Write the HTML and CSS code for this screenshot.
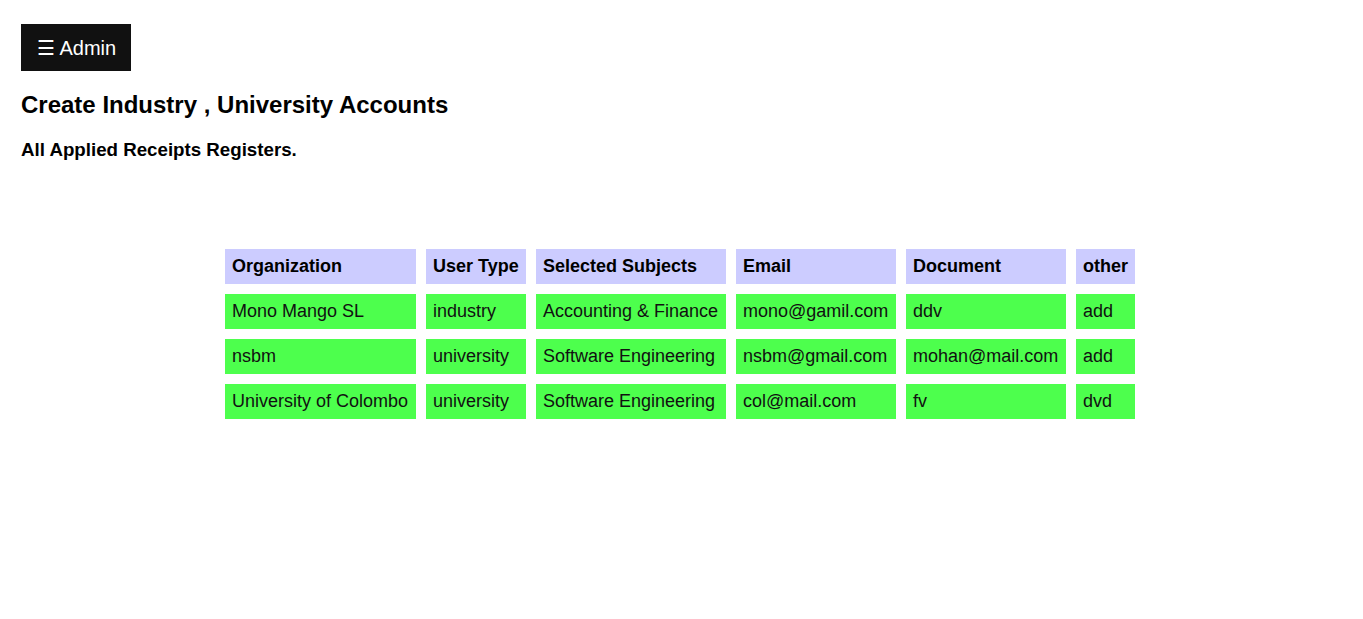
FILE: index.html
```html
<!DOCTYPE html>
<html>
<head>
<meta charset="utf-8">
<link rel="stylesheet" href="styles.css">
</head>
<body>
<div class="page">
  <div class="menu-btn">☰ Admin</div>
  <h2 class="title">Create Industry , University Accounts</h2>
  <h3 class="subtitle">All Applied Receipts Registers.</h3>
  <table class="reg">
    <thead>
      <tr><th class="c-org">Organization</th><th class="c-type">User Type</th><th class="c-sub">Selected Subjects</th><th class="c-mail">Email</th><th class="c-doc">Document</th><th class="c-oth">other</th></tr>
    </thead>
    <tbody>
      <tr><td>Mono Mango SL</td><td>industry</td><td>Accounting &amp; Finance</td><td>mono@gamil.com</td><td>ddv</td><td>add</td></tr>
      <tr><td>nsbm</td><td>university</td><td>Software Engineering</td><td>nsbm@gmail.com</td><td>mohan@mail.com</td><td>add</td></tr>
      <tr><td>University of Colombo</td><td>university</td><td>Software Engineering</td><td>col@mail.com</td><td>fv</td><td>dvd</td></tr>
    </tbody>
  </table>
</div>
</body>
</html>
```
FILE: styles.css
```css
html, body {
  margin: 0;
  padding: 0;
  background: #fff;
  font-family: "Liberation Sans", Arial, sans-serif;
  color: #000;
}
.page {
  padding: 24px 24px 24px 21px;
}
.menu-btn {
  display: inline-block;
  background: #111;
  color: #fff;
  font-size: 20px;
  width: 110px;
  height: 47px;
  line-height: 49px;
  padding: 0 0 0 16px;
  box-sizing: border-box;
}
.title {
  font-size: 24px;
  font-weight: bold;
  margin: 20px 0 0;
  line-height: 28px;
}
.subtitle {
  font-size: 18.72px;
  font-weight: bold;
  margin: 20px 0 0;
  line-height: 21px;
}
.reg {
  margin: 79px auto 0;
  border-spacing: 10px;
  font-size: 18px;
}
.reg th, .reg td {
  padding: 7px;
  text-align: left;
  line-height: 21px;
  white-space: nowrap;
}
.reg th {
  background: #ccccff;
  font-weight: bold;
}
.reg td {
  background: #4dff4d;
  color: #111;
}
.c-org { width: 177px; }
.c-type { width: 86px; }
.c-sub { width: 176px; }
.c-mail { width: 146px; }
.c-doc { width: 146px; }
.c-oth { width: 45px; }
```
